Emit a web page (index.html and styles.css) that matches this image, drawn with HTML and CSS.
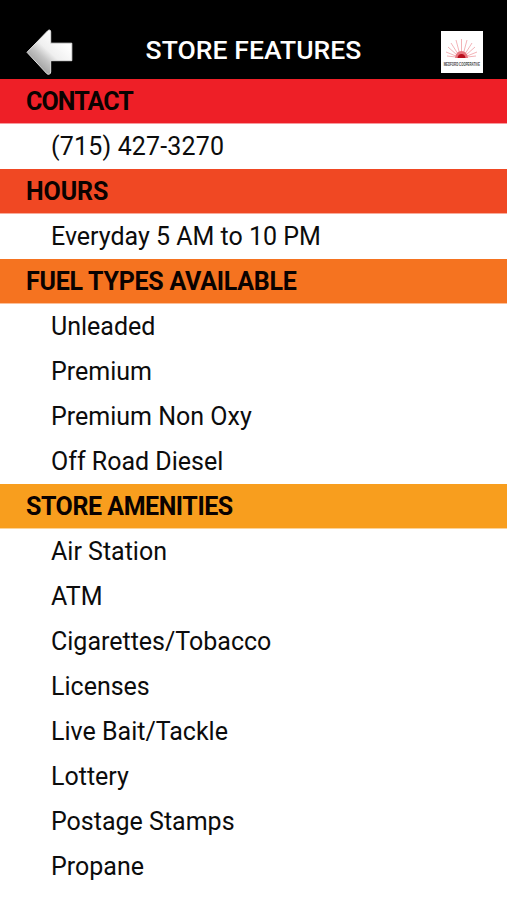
FILE: index.html
```html
<!DOCTYPE html>
<html lang="en">
<head>
<meta charset="utf-8">
<title>Store Features</title>
<link rel="stylesheet" href="styles.css">
</head>
<body>
<header class="topbar">
  <svg class="back" viewBox="0 0 50 48" role="img" aria-label="Back">
    <defs>
      <linearGradient id="metal" x1="0.1" y1="0.9" x2="0.75" y2="0.2">
        <stop offset="0.1" stop-color="#999"/>
        <stop offset="0.4" stop-color="#c4c4c4"/>
        <stop offset="0.6" stop-color="#efefef"/>
        <stop offset="1" stop-color="#fff"/>
      </linearGradient>
    </defs>
    <path d="M2 24.300 L23 2.500 Q25.700 1 25.700 4 V15.200 H46.800 V32.700 H25.700 V44 Q25.200 47.500 22 45.800 Z" fill="url(#metal)" stroke="#e2e2e2" stroke-width="1" stroke-linejoin="round"/>
  </svg>
  <h1 class="title">STORE FEATURES</h1>
  <svg class="logo" viewBox="0 0 42 42" role="img">
    <rect width="42" height="42" fill="#fff"/>
    <g stroke="#efa0a5" stroke-width="0.8">
      <path d="M20.500 22V8M18.500 22L15 9M22.500 22L26 9M17 23L10 12M24 23L31 12M16 24L7 16M25 24L34 16M15 25L5 21M26 25L36 21M15 26L6 25M26 26L35 25"/>
    </g>
    <path d="M14 27Q15 20 20.500 20Q26 20 27 27Z" fill="#e87780"/>
    <path d="M16.500 27Q17 23 20.500 23Q24 23 24.500 27Z" fill="#b80f1d"/>
    <text class="logo-name" transform="translate(20.800 34.500) scale(1 1.900)" text-anchor="middle">MEDFORD COOPERATIVE</text>
  </svg>
</header>
<main>
  <section>
    <h2 class="heading contact">CONTACT</h2>
    <ul class="list"><li class="phone">(715) 427-3270</li></ul>
  </section>
  <section>
    <h2 class="heading hours">HOURS</h2>
    <ul class="list"><li>Everyday 5 AM to 10 PM</li></ul>
  </section>
  <section>
    <h2 class="heading fuel">FUEL TYPES AVAILABLE</h2>
    <ul class="list">
      <li>Unleaded</li>
      <li>Premium</li>
      <li>Premium Non Oxy</li>
      <li>Off Road Diesel</li>
    </ul>
  </section>
  <section>
    <h2 class="heading amenities">STORE AMENITIES</h2>
    <ul class="list">
      <li>Air Station</li>
      <li>ATM</li>
      <li>Cigarettes/Tobacco</li>
      <li>Licenses</li>
      <li>Live Bait/Tackle</li>
      <li>Lottery</li>
      <li>Postage Stamps</li>
      <li>Propane</li>
    </ul>
  </section>
</main>
</body>
</html>
```
FILE: styles.css
```css
* { box-sizing: border-box; }
body {
  margin: 0;
  background: #fff;
  color: #0c0c0c;
  font-family: Roboto, "Liberation Sans", sans-serif;
  font-size: 25px;
}
.topbar {
  display: flex;
  align-items: flex-end;
  justify-content: space-between;
  height: 79px;
  padding: 0 24px 6px 25px;
  background: #000;
}
.back { width: 50px; height: 48px; margin-bottom: -3px; }
.title {
  margin: 0 9px 0 0;
  color: #fff;
  font-size: 26.5px;
  font-weight: 500;
  letter-spacing: 0.06px;
  line-height: 47px;
  white-space: nowrap;
}
.logo { width: 42px; height: 42px; }
.logo-name { font: bold 2.9px "Liberation Sans", sans-serif; fill: #444; }
.heading {
  height: 45px;
  margin: 0;
  padding-left: 26px;
  border-bottom: 1px solid rgba(255, 255, 255, 0.55);
  font-size: 25px;
  font-weight: 700;
  line-height: 45px;
  color: #0a0200;
}
.contact { background: #ee1f27; letter-spacing: -0.9px; }
.hours { background: #f04823; letter-spacing: -0.1px; }
.fuel { background: #f57320; letter-spacing: -0.26px; }
.amenities { background: #f89e1e; letter-spacing: -0.46px; }
.list { margin: 0; padding: 0; list-style: none; }
.list li {
  height: 45px;
  padding-left: 51px;
  line-height: 45px;
  white-space: nowrap;
}
.list .phone { letter-spacing: 0.17px; }
```
